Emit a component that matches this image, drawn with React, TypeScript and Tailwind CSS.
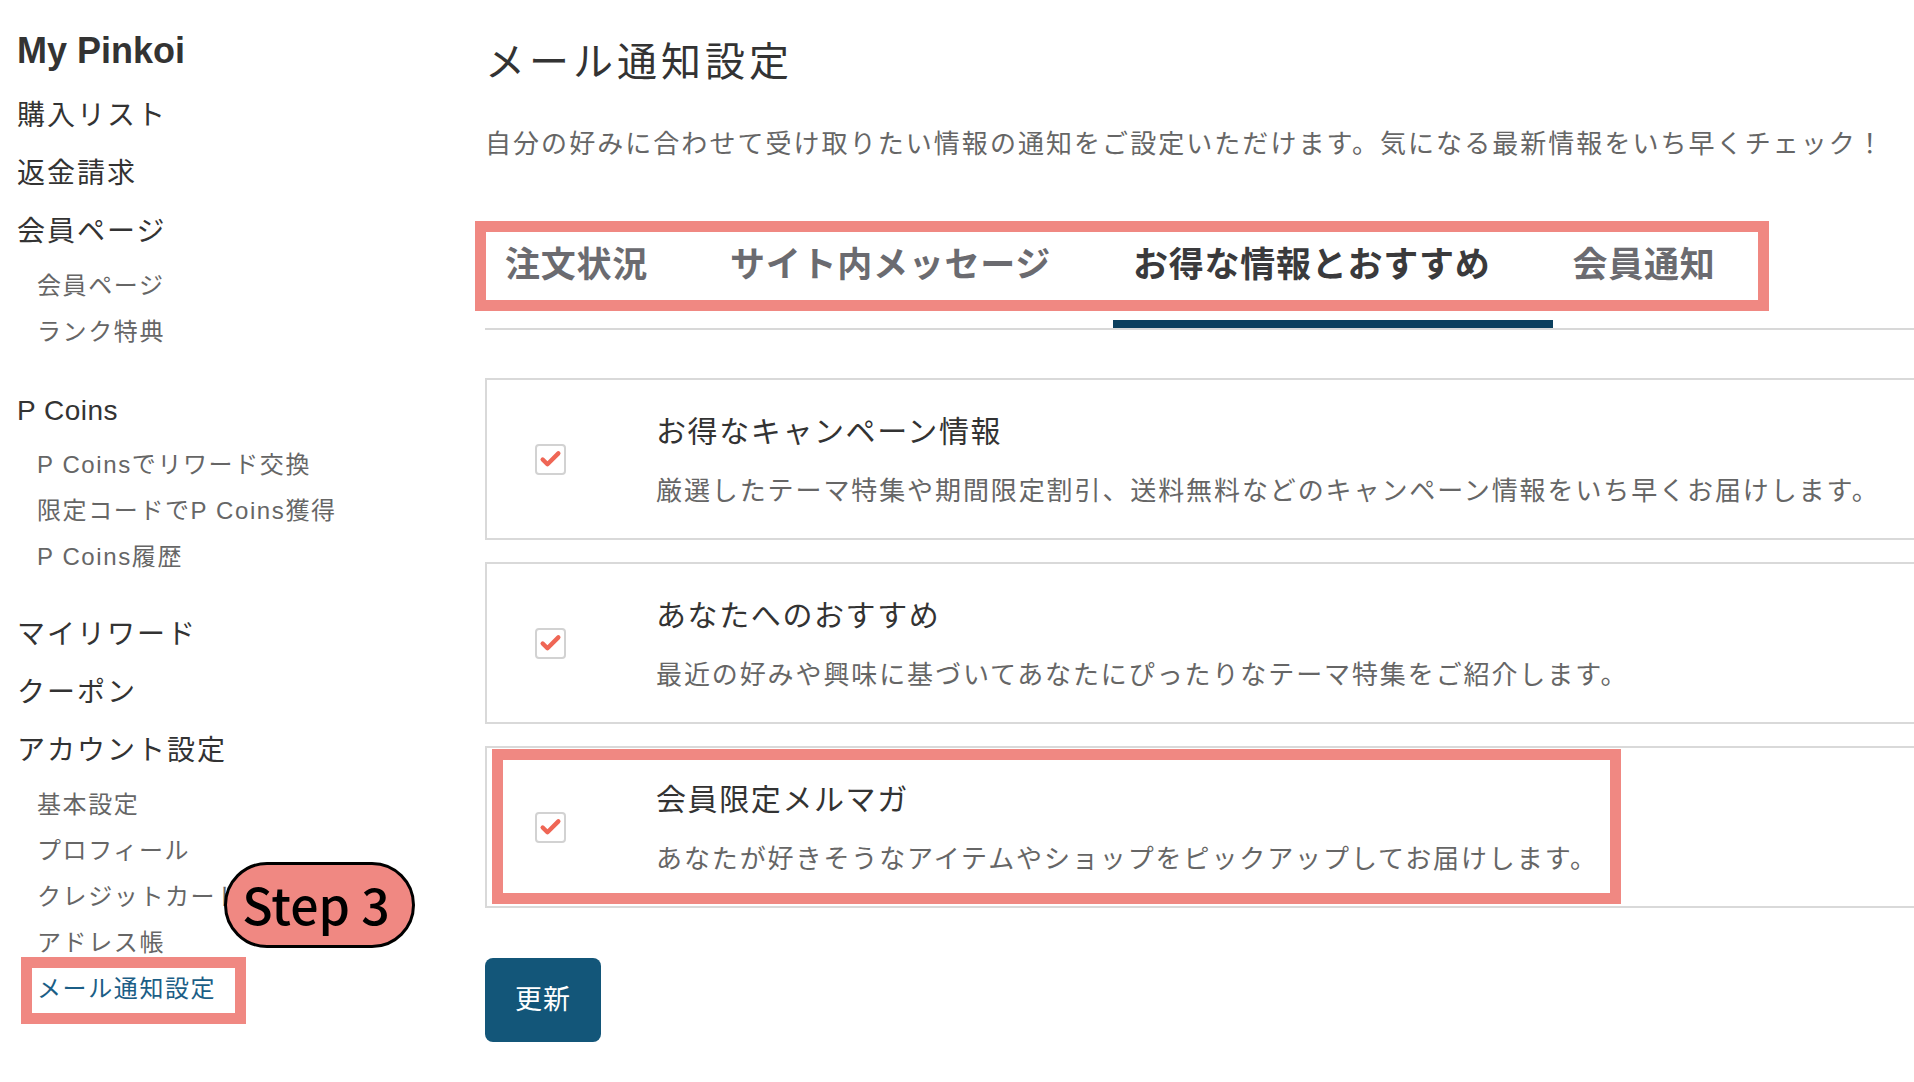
const mainMenu = [
  {
    label: "購入リスト",
    children: [] as string[],
  },
  { label: "返金請求", children: [] as string[] },
  { label: "会員ページ", children: ["会員ページ", "ランク特典"] },
];

const coinMenu = {
  label: "P Coins",
  children: ["P Coinsでリワード交換", "限定コードでP Coins獲得", "P Coins履歴"],
};

const accountMenu = [
  { label: "マイリワード", children: [] as string[] },
  { label: "クーポン", children: [] as string[] },
  {
    label: "アカウント設定",
    children: ["基本設定", "プロフィール", "クレジットカード", "アドレス帳", "メール通知設定"],
  },
];

const tabs = [
  { label: "注文状況", active: false },
  { label: "サイト内メッセージ", active: false },
  { label: "お得な情報とおすすめ", active: true },
  { label: "会員通知", active: false },
];

const options = [
  {
    title: "お得なキャンペーン情報",
    desc: "厳選したテーマ特集や期間限定割引、送料無料などのキャンペーン情報をいち早くお届けします。",
  },
  {
    title: "あなたへのおすすめ",
    desc: "最近の好みや興味に基づいてあなたにぴったりなテーマ特集をご紹介します。",
  },
  {
    title: "会員限定メルマガ",
    desc: "あなたが好きそうなアイテムやショップをピックアップしてお届けします。",
  },
];

function MenuGroup({
  label,
  children,
  latin = false,
}: {
  label: string;
  children: string[];
  latin?: boolean;
}) {
  return (
    <div>
      <div
        className={`h-[58px] text-[28px] leading-[58px] text-[#333] ${
          latin ? "tracking-[0.5px]" : "tracking-[2px]"
        }`}
      >
        {label}
      </div>
      {children.length > 0 && (
        <div className="mt-[2px] flex flex-col">
          {children.map((child) => (
            <div
              key={child}
              className={`h-[46px] whitespace-nowrap pl-[20px] text-[24px] leading-[46px] tracking-[1.6px] ${
                child === "メール通知設定" ? "text-[#1b5e86]" : "text-[#666]"
              }`}
            >
              {child}
            </div>
          ))}
        </div>
      )}
    </div>
  );
}

function CheckBox() {
  return (
    <div className="flex h-[31px] w-[31px] shrink-0 items-center justify-center rounded-[4px] border-2 border-[#d2d2d2] bg-white">
      <svg viewBox="0 0 31 31" className="h-[31px] w-[31px]">
        <path
          d="M6.5 15.5 L12 21 L24.5 8.5"
          fill="none"
          stroke="#ef6655"
          strokeWidth="5"
          strokeLinecap="round"
          strokeLinejoin="round"
        />
      </svg>
    </div>
  );
}

export default function App() {
  return (
    <div className="relative flex h-[1082px] w-[1914px] overflow-hidden bg-white font-['Liberation_Sans','Noto_Sans_CJK_JP',sans-serif]">
      {/* Sidebar */}
      <aside className="w-[485px] shrink-0 pl-[17px] pt-[26px]">
        <h1 className="h-[50px] text-[36px] font-bold leading-[50px] text-[#333]">My Pinkoi</h1>
        <nav className="mt-[11px]">
          {mainMenu.map((item) => (
            <MenuGroup key={item.label} label={item.label} children={item.children} />
          ))}
          <div className="mt-[27px]">
            <MenuGroup label={coinMenu.label} children={coinMenu.children} latin />
          </div>
          <div className="mt-[26px]">
            {accountMenu.map((item) => (
              <MenuGroup key={item.label} label={item.label} children={item.children} />
            ))}
          </div>
        </nav>
      </aside>

      {/* Main */}
      <main className="min-w-0 flex-1 pt-[32px]">
        <h2 className="h-[60px] text-[40px] leading-[60px] tracking-[4px] text-[#333]">メール通知設定</h2>
        <p className="mt-[32px] whitespace-nowrap text-[26px] leading-[40px] tracking-[2.05px] text-[#666]">
          自分の好みに合わせて受け取りたい情報の通知をご設定いただけます。気になる最新情報をいち早くチェック！
        </p>

        <div className="mt-[58px] flex border-b-2 border-[#d8d8d8]">
          {tabs.map((tab) => (
            <div
              key={tab.label}
              className={`whitespace-nowrap border-b-8 pb-[34px] pl-[20px] pr-[62px] pt-[22px] text-[35px] font-bold leading-[42px] tracking-[0.75px] ${
                tab.active ? "border-[#0b3f5e] text-[#3a3a3c]" : "border-transparent text-[#6b6b70]"
              }`}
            >
              {tab.label}
            </div>
          ))}
        </div>

        <div className="-mr-[10px] mt-[48px] flex flex-col gap-[22px]">
          {options.map((opt) => (
            <div
              key={opt.title}
              className="flex h-[162px] items-center gap-[90px] border-2 border-[#d9d9d9] pl-[48px]"
            >
              <CheckBox />
              <div className="flex flex-col gap-[21px] pt-[2px]">
                <div className="whitespace-nowrap text-[30px] leading-[40px] tracking-[1.6px] text-[#333]">
                  {opt.title}
                </div>
                <div className="whitespace-nowrap text-[26px] leading-[36px] tracking-[1.9px] text-[#666]">
                  {opt.desc}
                </div>
              </div>
            </div>
          ))}
        </div>

        <button className="mt-[50px] h-[84px] w-[116px] rounded-[8px] bg-[#135679] text-[27px] tracking-[1px] text-white">
          更新
        </button>
      </main>

      {/* Annotation overlays */}
      <div className="pointer-events-none absolute left-[475px] top-[221px] h-[90px] w-[1294px] border-[11px] border-[#f08882]" />
      <div className="pointer-events-none absolute left-[492px] top-[749px] h-[155px] w-[1129px] border-[11px] border-[#f08882]" />
      <div className="pointer-events-none absolute left-[21px] top-[957px] h-[67px] w-[225px] border-[11px] border-[#f08882]" />
      <div className="absolute left-[224px] top-[862px] flex h-[86px] w-[191px] items-center justify-center rounded-full border-[3px] border-black bg-[#f08882] pb-[4px] pr-[7px] font-['Noto_Sans_CJK_JP',sans-serif] text-[50px] font-medium leading-none text-black">
        Step 3
      </div>
    </div>
  );
}
